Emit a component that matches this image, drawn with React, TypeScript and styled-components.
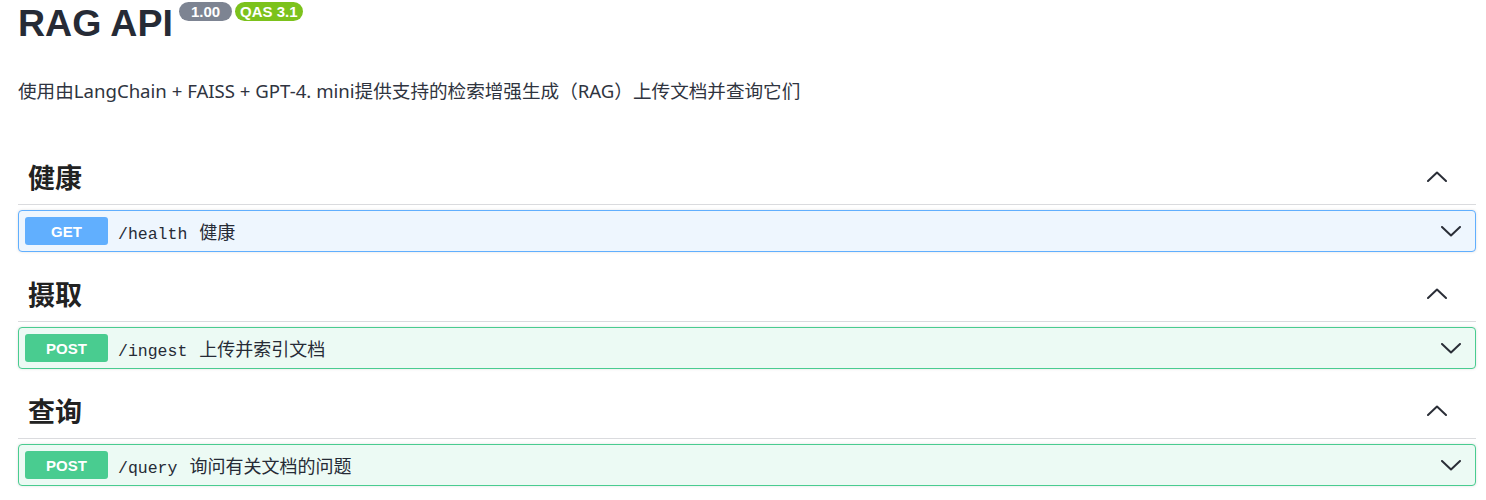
import styled, { createGlobalStyle } from "styled-components";

const GlobalStyle = createGlobalStyle`
  body {
    margin: 0;
    background: #ffffff;
    font-family: "Liberation Sans", "Noto Sans CJK SC", sans-serif;
    color: #3b4151;
  }
`;

const methodColors: Record<string, { main: string; bg: string }> = {
  get: { main: "#61affe", bg: "#eef6fe" },
  post: { main: "#49cc90", bg: "#ecfaf4" },
};

const Page = styled.div`
  padding: 1px 10px 0 18px;
`;

const TitleRow = styled.div`
  display: flex;
  align-items: flex-start;
`;

const Title = styled.h1`
  margin: 0;
  font-family: "Liberation Sans", Arial, sans-serif;
  font-size: 37.5px;
  font-weight: 700;
  line-height: 44px;
  color: #262b36;
`;

const Badge = styled.span<{ $color: string; $pad: number }>`
  display: inline-block;
  margin-top: 1px;
  margin-left: ${(p) => (p.$pad > 10 ? 6 : 3)}px;
  padding: 1px ${(p) => p.$pad}px;
  border-radius: 57px;
  background: ${(p) => p.$color};
  color: #ffffff;
  font-family: "Liberation Sans", Arial, sans-serif;
  font-size: 15px;
  font-weight: 700;
  line-height: 17px;
`;

const Description = styled.p`
  margin: 32px 0 0;
  font-family: "Noto Sans", "Noto Sans CJK SC", sans-serif;
  font-size: 18.6px;
  line-height: 27px;
  color: #2f3440;
`;

const TagSection = styled.section`
  margin-bottom: 14px;

  &:first-of-type {
    margin-top: 45px;
  }
`;

const TagHeader = styled.div`
  box-sizing: border-box;
  height: 56px;
  display: flex;
  align-items: center;
  justify-content: space-between;
  padding: 0 29px 0 10px;
  border-bottom: 1px solid #dadbde;
`;

const TagTitle = styled.h3`
  margin: 0;
  font-family: "Noto Sans CJK SC", sans-serif;
  font-size: 27px;
  font-weight: 700;
  color: #222222;
`;

const IconButton = styled.button`
  display: flex;
  align-items: center;
  padding: 0;
  border: none;
  background: none;
  color: #2a2e37;
  cursor: pointer;
`;

const Opblock = styled.div<{ $method: string }>`
  box-sizing: border-box;
  height: 42px;
  margin-top: 5px;
  display: flex;
  align-items: center;
  padding: 0 14px 0 6px;
  border: 1px solid ${(p) => methodColors[p.$method].main};
  border-radius: 4px;
  background: ${(p) => methodColors[p.$method].bg};
  box-shadow: 0 0 3px rgba(0, 0, 0, 0.12);
`;

const MethodBadge = styled.span<{ $method: string }>`
  width: 83px;
  height: 28px;
  display: flex;
  align-items: center;
  justify-content: center;
  border-radius: 3px;
  background: ${(p) => methodColors[p.$method].main};
  color: #ffffff;
  font-family: "Liberation Sans", Arial, sans-serif;
  font-size: 15px;
  font-weight: 700;
`;

const SummaryLine = styled.div`
  flex: 1;
  display: flex;
  align-items: baseline;
`;

const Path = styled.span`
  padding: 0 12px 0 10px;
  font-family: "Liberation Mono", "DejaVu Sans Mono", monospace;
  font-size: 16.5px;
  color: #262b36;
`;

const Summary = styled.span`
  font-family: "Noto Sans CJK SC", sans-serif;
  font-size: 18px;
  color: #262b36;
`;

function Chevron({ up }: { up?: boolean }) {
  return (
    <svg width="20" height="11" viewBox="0 0 20 11" fill="none">
      <polyline
        points={up ? "1,10 10,1.5 19,10" : "1,1 10,9.5 19,1"}
        stroke="currentColor"
        strokeWidth="2"
        strokeLinecap="round"
        strokeLinejoin="round"
      />
    </svg>
  );
}

const tags = [
  { name: "健康", method: "get", path: "/health", summary: "健康" },
  { name: "摄取", method: "post", path: "/ingest", summary: "上传并索引文档" },
  { name: "查询", method: "post", path: "/query", summary: "询问有关文档的问题" },
];

export default function App() {
  return (
    <>
      <GlobalStyle />
      <Page>
        <TitleRow>
          <Title>RAG API</Title>
          <Badge $color="#7d8492" $pad={12}>1.00</Badge>
          <Badge $color="#7cc21c" $pad={5}>QAS 3.1</Badge>
        </TitleRow>
        <Description>
          使用由LangChain + FAISS + GPT-4. mini提供支持的检索增强生成（RAG）上传文档并查询它们
        </Description>
        {tags.map((t) => (
          <TagSection key={t.name}>
            <TagHeader>
              <TagTitle>{t.name}</TagTitle>
              <IconButton aria-label="collapse">
                <Chevron up />
              </IconButton>
            </TagHeader>
            <Opblock $method={t.method}>
              <MethodBadge $method={t.method}>{t.method.toUpperCase()}</MethodBadge>
              <SummaryLine>
                <Path>{t.path}</Path>
                <Summary>{t.summary}</Summary>
              </SummaryLine>
              <IconButton aria-label="expand">
                <Chevron />
              </IconButton>
            </Opblock>
          </TagSection>
        ))}
      </Page>
    </>
  );
}
